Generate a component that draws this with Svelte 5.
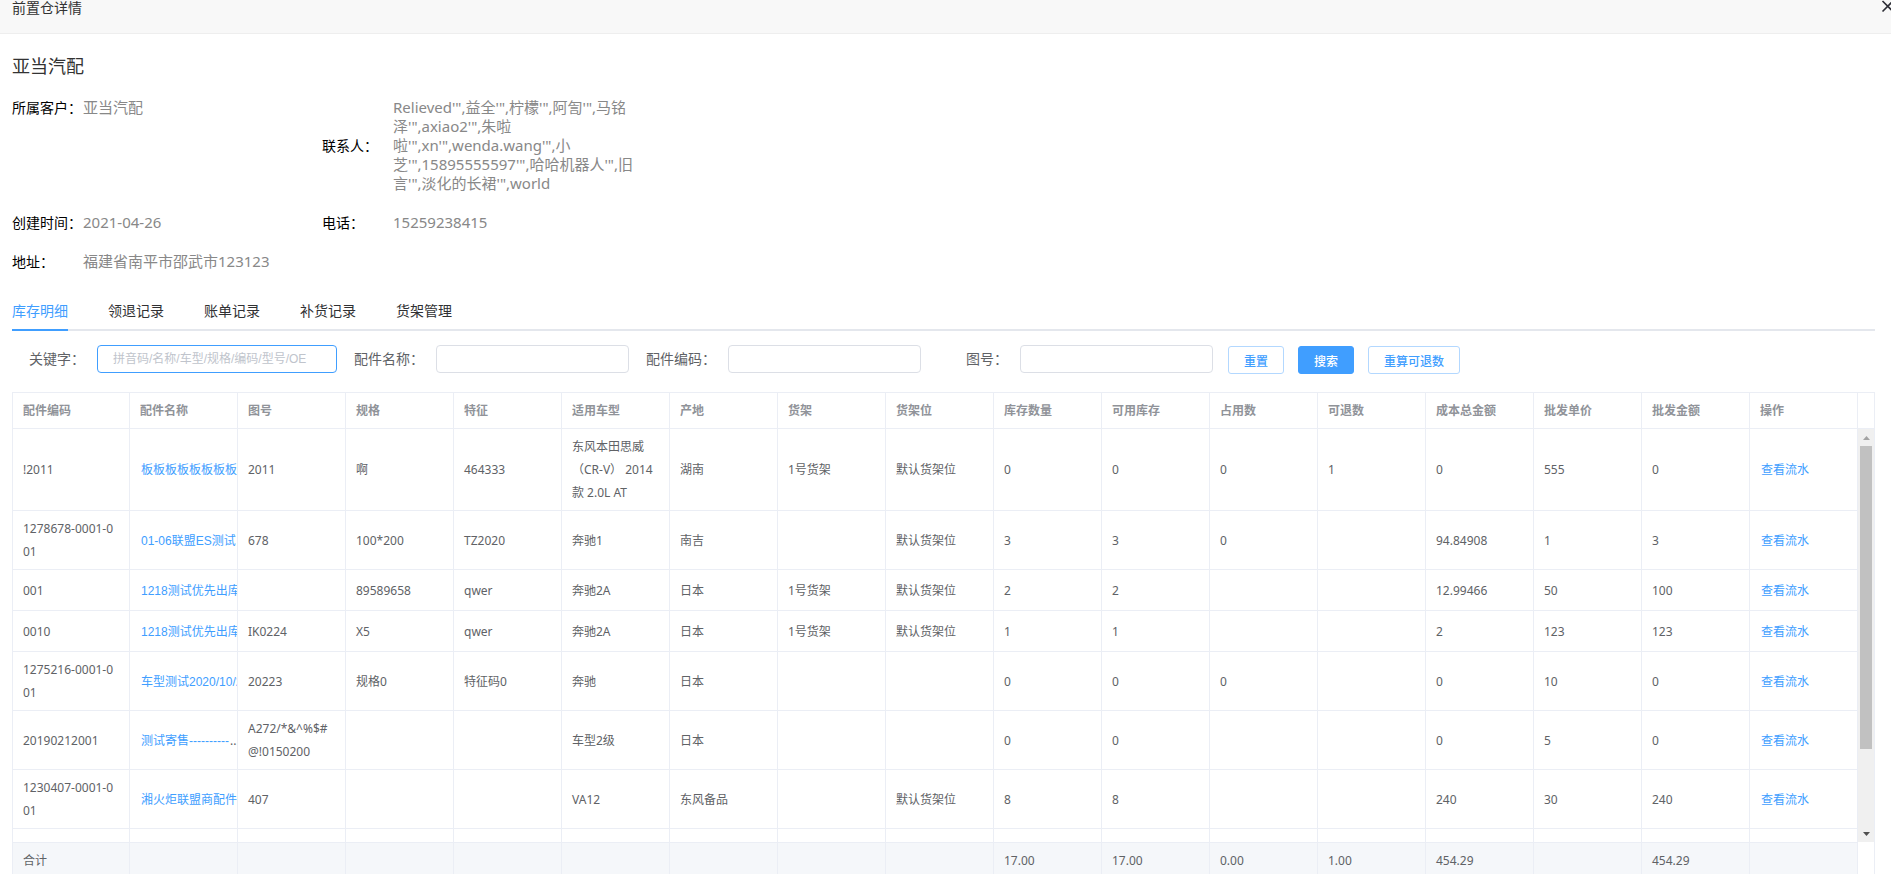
<script lang="ts">
  type Row = Record<string, string>;

  const columns = [
    { key: 'code', label: '配件编码' },
    { key: 'name', label: '配件名称' },
    { key: 'drawing', label: '图号' },
    { key: 'spec', label: '规格' },
    { key: 'feature', label: '特征' },
    { key: 'model', label: '适用车型' },
    { key: 'origin', label: '产地' },
    { key: 'shelf', label: '货架' },
    { key: 'slot', label: '货架位' },
    { key: 'stock', label: '库存数量' },
    { key: 'available', label: '可用库存' },
    { key: 'used', label: '占用数' },
    { key: 'returnable', label: '可退数' },
    { key: 'cost', label: '成本总金额' },
    { key: 'price', label: '批发单价' },
    { key: 'amount', label: '批发金额' },
    { key: 'action', label: '操作' }
  ];

  const rows: Row[] = [
    { code: '!2011', name: '板板板板板板板板', drawing: '2011', spec: '啊', feature: '464333', model: '东风本田思威（CR-V） 2014款 2.0L AT', origin: '湖南', shelf: '1号货架', slot: '默认货架位', stock: '0', available: '0', used: '0', returnable: '1', cost: '0', price: '555', amount: '0' },
    { code: '1278678-0001-001', name: '01-06联盟ES测试', drawing: '678', spec: '100*200', feature: 'TZ2020', model: '奔驰1', origin: '南吉', slot: '默认货架位', stock: '3', available: '3', used: '0', cost: '94.84908', price: '1', amount: '3' },
    { code: '001', name: '1218测试优先出库', spec: '89589658', feature: 'qwer', model: '奔驰2A', origin: '日本', shelf: '1号货架', slot: '默认货架位', stock: '2', available: '2', cost: '12.99466', price: '50', amount: '100' },
    { code: '0010', name: '1218测试优先出库', drawing: 'IK0224', spec: 'X5', feature: 'qwer', model: '奔驰2A', origin: '日本', shelf: '1号货架', slot: '默认货架位', stock: '1', available: '1', cost: '2', price: '123', amount: '123' },
    { code: '1275216-0001-001', name: '车型测试2020/10/2', drawing: '20223', spec: '规格0', feature: '特征码0', model: '奔驰', origin: '日本', stock: '0', available: '0', used: '0', cost: '0', price: '10', amount: '0' },
    { code: '20190212001', name: '测试寄售----------', more: '...', drawing: 'A272/*&^%$#@!0150200', model: '车型2级', origin: '日本', stock: '0', available: '0', cost: '0', price: '5', amount: '0' },
    { code: '1230407-0001-001', name: '湘火炬联盟商配件', drawing: '407', model: 'VA12', origin: '东风备品', slot: '默认货架位', stock: '8', available: '8', cost: '240', price: '30', amount: '240' },
    {}
  ];

  const totals: Row = {
    code: '合计',
    stock: '17.00',
    available: '17.00',
    used: '0.00',
    returnable: '1.00',
    cost: '454.29',
    amount: '454.29'
  };

  const tabs = ['库存明细', '领退记录', '账单记录', '补货记录', '货架管理'];
  let active = $state(0);

  let form = $state({ keyword: '', name: '', code: '', drawing: '' });

  function reset() {
    form = { keyword: '', name: '', code: '', drawing: '' };
  }
</script>

{#snippet cols()}
  <colgroup>
    {#each columns as col, i (col.key)}
      <col class:col-first={i === 0} />
    {/each}
  </colgroup>
{/snippet}

<div class="dialog">
  <header class="dialog__header">
    <span>前置仓详情</span>
    <button class="dialog__close" type="button" aria-label="关闭">
      <svg viewBox="0 0 16 16" width="16" height="16">
        <path d="M2.5 1 L13 11.5 M13 1 L2.5 11.5" fill="none" stroke="#2d2e36" stroke-width="1.6" />
      </svg>
    </button>
  </header>

  <main class="dialog__body">
    <h1>亚当汽配</h1>

    <dl class="info">
      <div class="info__item info__item--top">
        <dt>所属客户：</dt>
        <dd>亚当汽配</dd>
      </div>
      <div class="info__item">
        <dt>联系人：</dt>
        <dd>Relieved'",益全'",柠檬'",阿訇'",马铭泽'",axiao2'",朱啦啦'",xn'",wenda.wang'",小芝'",15895555597'",哈哈机器人'",旧言'",淡化的长裙'",world</dd>
      </div>
      <div class="info__item">
        <dt>创建时间：</dt>
        <dd>2021-04-26</dd>
      </div>
      <div class="info__item">
        <dt>电话：</dt>
        <dd>15259238415</dd>
      </div>
      <div class="info__item">
        <dt>地址：</dt>
        <dd>福建省南平市邵武市123123</dd>
      </div>
    </dl>

    <div class="tabs" role="tablist">
      {#each tabs as tab, i (tab)}
        <button
          class="tabs__item"
          class:tabs__item--active={active === i}
          type="button"
          role="tab"
          aria-selected={active === i}
          onclick={() => (active = i)}>{tab}</button>
      {/each}
    </div>

    <form class="search" onsubmit={(e) => e.preventDefault()}>
      <label class="search__label search__label--first" for="keyword">关键字：</label>
      <input
        id="keyword"
        class="search__input search__input--wide"
        type="text"
        placeholder="拼音码/名称/车型/规格/编码/型号/OE"
        bind:value={form.keyword} />
      <label class="search__label" for="name">配件名称：</label>
      <input id="name" class="search__input" type="text" bind:value={form.name} />
      <label class="search__label" for="code">配件编码：</label>
      <input id="code" class="search__input" type="text" bind:value={form.code} />
      <label class="search__label" for="drawing">图号：</label>
      <input id="drawing" class="search__input" type="text" bind:value={form.drawing} />
      <div class="search__buttons">
        <button class="btn" type="button" onclick={reset}>重置</button>
        <button class="btn btn--primary" type="submit">搜索</button>
        <button class="btn" type="button">重算可退数</button>
      </div>
    </form>

    <div class="grid">
      <div class="grid__section">
        <table>
          {@render cols()}
          <thead>
            <tr>
              {#each columns as col (col.key)}
                <th scope="col">{col.label}</th>
              {/each}
            </tr>
          </thead>
        </table>
        <div class="grid__gutter"></div>
      </div>

      <div class="grid__section grid__section--body">
        <div class="grid__scroll">
          <table>
            {@render cols()}
            <tbody>
              {#each rows as row, i (i)}
                <tr>
                  {#each columns as col (col.key)}
                    {#if col.key === 'name'}
                      <td class="cell--clip">
                        {#if row.name}<button class="link" type="button">{row.name}</button>{row.more ?? ''}{/if}
                      </td>
                    {:else if col.key === 'action'}
                      <td>
                        {#if row.code}<button class="link" type="button">查看流水</button>{/if}
                      </td>
                    {:else}
                      <td>{row[col.key] ?? ''}</td>
                    {/if}
                  {/each}
                </tr>
              {/each}
            </tbody>
          </table>
        </div>
        <div class="scrollbar" aria-hidden="true">
          <svg viewBox="0 0 17 17" width="17" height="17"><path d="M5 11 L8.5 7 L12 11 Z" fill="#a3a3a3" /></svg>
          <div class="scrollbar__track"><div class="scrollbar__thumb"></div></div>
          <svg viewBox="0 0 17 17" width="17" height="17"><path d="M5 7 L8.5 11 L12 7 Z" fill="#505050" /></svg>
        </div>
      </div>

      <div class="grid__section grid__section--footer">
        <table>
          {@render cols()}
          <tbody>
            <tr>
              {#each columns as col (col.key)}
                <td>{totals[col.key] ?? ''}</td>
              {/each}
            </tr>
          </tbody>
        </table>
        <div class="grid__gutter"></div>
      </div>
    </div>
  </main>
</div>

<style>
  :global(body) {
    background: #fff;
    overflow: hidden;
  }

  .dialog {
    height: 100vh;
    overflow: hidden;
    font-family: 'Noto Sans', 'Noto Sans CJK SC', sans-serif;
    font-size: 14px;
    color: #606266;
  }

  .dialog__header {
    position: relative;
    box-sizing: border-box;
    height: 34px;
    padding: 0 12px;
    overflow: hidden;
    background: #f8f8f8;
    border-bottom: 1px solid #eee;
    color: #333;
    line-height: 16px;
  }

  .dialog__close {
    position: absolute;
    top: 0;
    right: -5px;
    padding: 0;
    border: 0;
    background: none;
    line-height: 0;
    cursor: pointer;
  }

  .dialog__body {
    padding: 20px 16px 0 12px;
  }

  h1 {
    margin: 0 0 20px;
    font-size: 18px;
    font-weight: 400;
    line-height: 24px;
    color: #333;
  }

  .info {
    display: grid;
    grid-template-columns: 310px 320px;
    row-gap: 20px;
    margin: 0 0 20px;
    line-height: 19px;
  }

  .info__item {
    display: flex;
    align-items: center;
  }

  .info__item--top {
    align-items: flex-start;
  }

  .info dt {
    flex: 0 0 71px;
    color: #000;
    white-space: nowrap;
  }

  .info dd {
    margin: 0;
    font-size: 15px;
    color: #888;
  }

  .tabs {
    display: flex;
    gap: 40px;
    box-sizing: border-box;
    height: 40px;
    border-bottom: 2px solid #e4e7ed;
  }

  .tabs__item {
    height: 40px;
    padding: 0;
    border: 0;
    border-bottom: 2px solid transparent;
    background: none;
    font: inherit;
    color: #303133;
    cursor: pointer;
  }

  .tabs__item--active {
    border-bottom-color: #409eff;
    color: #409eff;
  }

  .search {
    display: flex;
    align-items: flex-start;
    margin: 14px 0 18px;
  }

  .search__label {
    box-sizing: border-box;
    flex: 0 0 99px;
    padding-right: 12px;
    line-height: 28px;
    text-align: right;
    white-space: nowrap;
  }

  .search__label--first {
    flex-basis: 85px;
  }

  .search__input {
    box-sizing: border-box;
    width: 193px;
    height: 28px;
    padding: 0 15px;
    border: 1px solid #dcdfe6;
    border-radius: 4px;
    outline: none;
    background: #fff;
    font-family: 'Liberation Sans', 'Noto Sans CJK SC', sans-serif;
    font-size: 12px;
    color: #606266;
  }

  .search__input::placeholder {
    color: #c0c4cc;
  }

  .search__input--wide {
    width: 240px;
    border-color: #409eff;
  }

  .search__buttons {
    display: flex;
    gap: 14px;
    padding: 1px 0 0 15px;
  }

  .btn {
    box-sizing: border-box;
    height: 28px;
    padding: 0 15px;
    border: 1px solid #b3d8ff;
    border-radius: 3px;
    background: #fff;
    font-family: 'Liberation Sans', 'Noto Sans CJK SC', sans-serif;
    font-size: 12px;
    font-weight: 500;
    color: #409eff;
    white-space: nowrap;
    cursor: pointer;
  }

  .btn--primary {
    border-color: #409eff;
    background: #409eff;
    color: #fff;
  }

  .grid {
    border: 1px solid #ebeef5;
    border-bottom: 0;
    font-size: 12px;
    line-height: 23px;
  }

  .grid__section {
    display: flex;
  }

  .grid__section table {
    flex: 1;
    width: 100%;
    min-width: 0;
    table-layout: fixed;
    border-collapse: separate;
    border-spacing: 0;
  }

  .grid__section--body {
    max-height: 413px;
  }

  .grid__scroll {
    flex: 1;
    min-width: 0;
    overflow-y: auto;
    scrollbar-width: none;
  }

  .grid__gutter {
    flex: 0 0 16px;
    border-bottom: 1px solid #ebeef5;
  }

  .grid__section--footer .grid__gutter {
    border-bottom: 0;
  }

  .col-first {
    width: 117px;
  }

  th,
  td {
    box-sizing: border-box;
    padding: 6px 10px;
    border-right: 1px solid #ebeef5;
    border-bottom: 1px solid #ebeef5;
    text-align: left;
    word-break: break-all;
  }

  th {
    font-weight: 700;
    color: #909399;
  }

  .grid__section--body td {
    height: 41px;
  }

  .cell--clip {
    padding-right: 0;
    overflow: hidden;
    white-space: nowrap;
  }

  .grid__section--footer td {
    border-top: 1px solid #ebeef5;
    background: #f5f7fa;
  }

  .link {
    padding: 0;
    border: 1px solid transparent;
    background: none;
    font-family: 'Liberation Sans', 'Noto Sans CJK SC', sans-serif;
    font-size: 12px;
    line-height: 12px;
    color: #409eff;
    cursor: pointer;
  }

  .scrollbar {
    display: flex;
    flex: 0 0 16px;
    flex-direction: column;
    overflow: hidden;
    background: #f0f0f0;
  }

  .scrollbar svg {
    flex: none;
  }

  .scrollbar__track {
    flex: 1;
    padding: 0 2px;
  }

  .scrollbar__thumb {
    height: 80%;
    background: #c1c1c1;
  }
</style>
